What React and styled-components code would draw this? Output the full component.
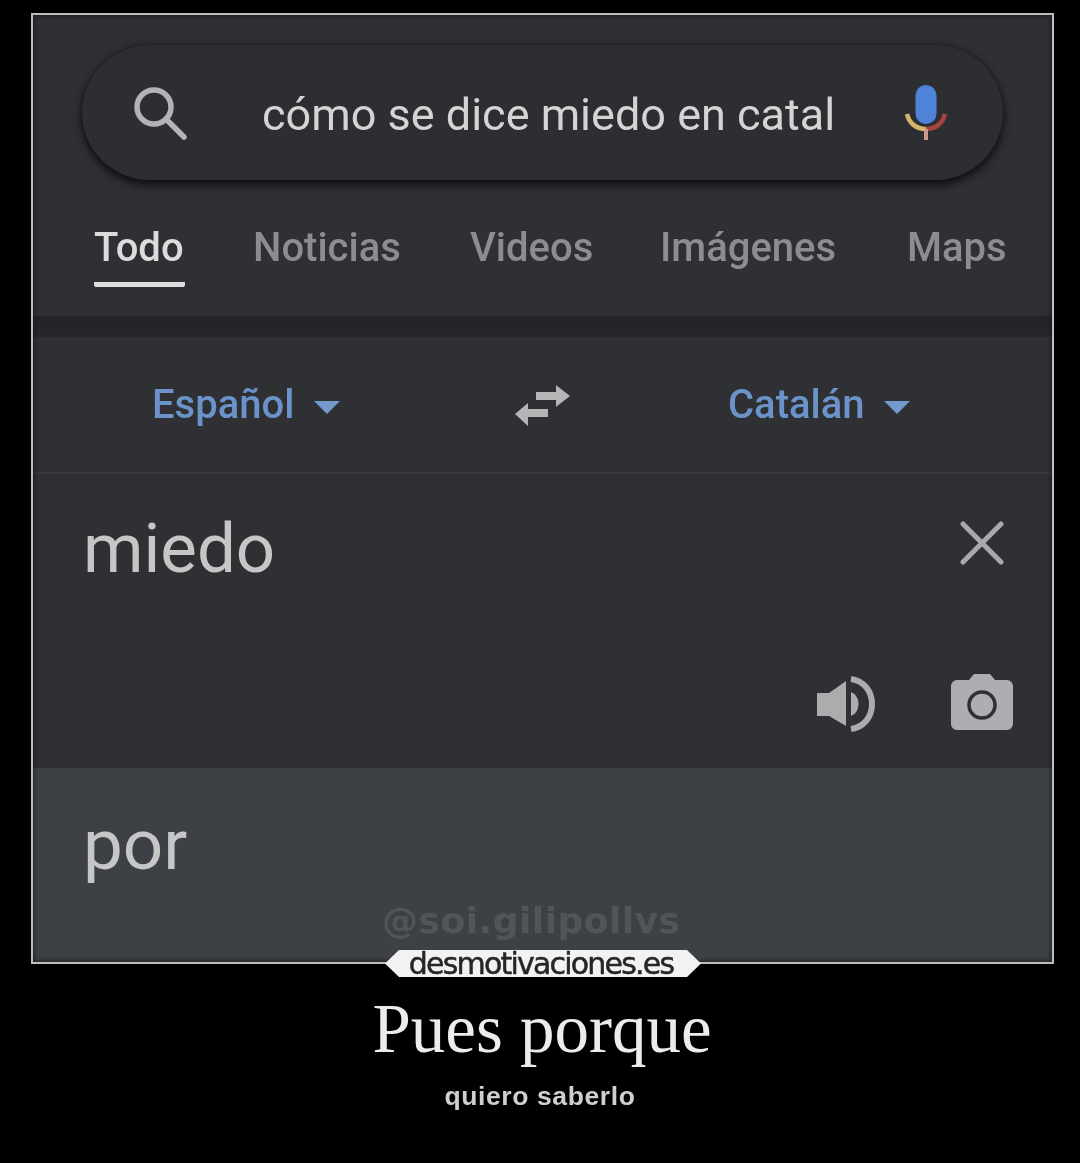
import React from "react";
import styled, { createGlobalStyle } from "styled-components";

const GlobalStyle = createGlobalStyle`
  html, body {
    margin: 0;
    background: #000;
  }
  * {
    box-sizing: border-box;
  }
`;

const SearchIcon = () => (
  <svg width="56" height="56" viewBox="0 0 56 56" fill="none" stroke="#b3b3b5" strokeWidth="5.5">
    <circle cx="21" cy="21" r="17" />
    <path d="M33 33 L51 51" strokeLinecap="round" />
  </svg>
);

const MicIcon = () => (
  <svg width="44" height="58" viewBox="0 0 44 58" fill="none" strokeWidth="4.5">
    <rect x="11.5" y="0" width="21" height="39" rx="10.5" fill="#4f83d8" />
    <path d="M3 29 C5 38 12 44 22 44" stroke="#d3b56c" />
    <path d="M22 44 C32 44 39 38 41 29" stroke="#a8443d" />
    <path d="M22 44 V55" stroke="#c99a8c" strokeWidth="4" />
  </svg>
);

const SwapIcon = () => (
  <svg width="56" height="44" viewBox="0 0 56 44" fill="#b5b5b7">
    <path d="M21 7 H41 V0 L55 11 L41 22 V15 H21 Z" />
    <path d="M33 24 H13 V18 L0 29 L13 41 V32 H33 Z" />
  </svg>
);

const CloseIcon = () => (
  <svg width="44" height="44" viewBox="0 0 44 44" stroke="#a9a9ab" strokeWidth="5" strokeLinecap="round">
    <path d="M3 3 L41 41 M41 3 L3 41" />
  </svg>
);

const SpeakerIcon = () => (
  <svg width="58" height="56" viewBox="0 0 58 56" fill="none">
    <path d="M0 17 H12 L29 5 V50 L12 40 H0 Z" fill="#acacae" />
    <path d="M34 16 C44 20 44 36 34 40 Z" fill="#acacae" />
    <path d="M34 3 C62 7 62 49 34 53" stroke="#acacae" strokeWidth="6" />
  </svg>
);

const CameraIcon = () => (
  <svg width="64" height="58" viewBox="0 0 64 58">
    <path
      d="M7 7 H19 L24 1 H40 L45 7 H57 C60 7 63 10 63 13 V51 C63 54 60 57 57 57 H7 C4 57 1 54 1 51 V13 C1 10 4 7 7 7 Z"
      fill="#adaeb2"
    />
    <circle cx="32" cy="32" r="13" fill="#adaeb2" stroke="#2f3034" strokeWidth="3.5" />
  </svg>
);

const tabs = [
  { label: "Todo", width: 91, gap: 0, active: true },
  { label: "Noticias", width: 148, gap: 68 },
  { label: "Videos", width: 122, gap: 69 },
  { label: "Imágenes", width: 178, gap: 68 },
  { label: "Maps", width: 98, gap: 69 },
];

const App = function () {
  return (
    <Page>
      <GlobalStyle />
      <Frame>
        <TopSection>
          <SearchPill>
            <SearchIconSlot>
              <SearchIcon />
            </SearchIconSlot>
            <Query>cómo se dice miedo en catal</Query>
            <MicSlot>
              <MicIcon />
            </MicSlot>
          </SearchPill>
          <TabRow>
            {tabs.map((tab) => (
              <Tab key={tab.label} $width={tab.width} $gap={tab.gap} $active={tab.active}>
                {tab.label}
              </Tab>
            ))}
          </TabRow>
        </TopSection>
        <DarkBand />
        <LangRow>
          <LangButton $width={188} $left={119}>
            Español <Caret />
          </LangButton>
          <SwapSlot>
            <SwapIcon />
          </SwapSlot>
          <LangButton $width={182} $left={157}>
            Catalán <Caret />
          </LangButton>
        </LangRow>
        <InputSection>
          <InputRow>
            <BigText $size={69}>miedo</BigText>
            <CloseSlot>
              <CloseIcon />
            </CloseSlot>
          </InputRow>
          <ActionRow>
            <SpeakerSlot>
              <SpeakerIcon />
            </SpeakerSlot>
            <CameraIcon />
          </ActionRow>
        </InputSection>
        <OutputSection>
          <BigText $size={71}>por</BigText>
          <Watermark>@soi.gilipollvs</Watermark>
        </OutputSection>
        <SiteLabel>desmotivaciones.es</SiteLabel>
      </Frame>
      <Title>Pues porque</Title>
      <Subtitle>quiero saberlo</Subtitle>
    </Page>
  );
};

export default App;

const Page = styled.div`
  width: 1080px;
  height: 1163px;
  padding: 13px 26px 0 31px;
  background: #000;
  overflow: hidden;
`;

const Frame = styled.div`
  position: relative;
  width: 1023px;
  height: 951px;
  border: 2px solid #bdbdbd;
  display: flex;
  flex-direction: column;
  background: #2f3034;
  &::after {
    content: "";
    position: absolute;
    inset: 0;
    box-shadow: inset 0 0 4px 1px rgba(18, 18, 20, 0.7);
    pointer-events: none;
  }
`;

const TopSection = styled.div`
  height: 301px;
  padding: 30px 46px 0 49px;
  background: #2f3034;
  filter: blur(0.6px);
`;

const SearchPill = styled.div`
  width: 921px;
  height: 135px;
  border-radius: 68px;
  background: #2d2e31;
  box-shadow: 0 5px 9px rgba(12, 12, 14, 0.85), 0 0 5px rgba(18, 18, 20, 0.6);
  display: flex;
  align-items: center;
`;

const SearchIconSlot = styled.div`
  width: 180px;
  padding: 3px 0 0 51px;
  display: flex;
`;

const Query = styled.div`
  width: 642px;
  padding-top: 4px;
  font: 400 45px "Roboto", sans-serif;
  color: #d4d4d4;
  white-space: nowrap;
`;

const MicSlot = styled.div`
  display: flex;
  padding-top: 3px;
`;

const TabRow = styled.div`
  display: flex;
  margin-top: 46px;
  margin-left: 12px;
`;

const Tab = styled.div`
  width: ${(p) => p.$width}px;
  margin-left: ${(p) => p.$gap}px;
  height: 61px;
  font: 500 40px/44px "Roboto", sans-serif;
  color: ${(p) => (p.$active ? "#dcdcdc" : "#8c8d94")};
  white-space: nowrap;
  border-bottom: ${(p) => (p.$active ? "5px solid #dedede" : "none")};
  border-radius: 0 0 2px 2px;
`;

const DarkBand = styled.div`
  height: 21px;
  background: linear-gradient(#222326, #27282b);
`;

const LangRow = styled.div`
  height: 137px;
  display: flex;
  align-items: center;
  border-bottom: 2px solid #38393d;
  filter: blur(0.6px);
`;

const LangButton = styled.div`
  width: ${(p) => p.$width}px;
  margin-left: ${(p) => p.$left}px;
  display: flex;
  align-items: center;
  justify-content: space-between;
  font: 500 40px "Roboto", sans-serif;
  color: #6b93c9;
  white-space: nowrap;
`;

const Caret = styled.span`
  width: 0;
  height: 0;
  margin-top: 6px;
  border-left: 13px solid transparent;
  border-right: 13px solid transparent;
  border-top: 13px solid #7399cd;
`;

const SwapSlot = styled.div`
  margin: 4px 0 0 175px;
  display: flex;
`;

const InputSection = styled.div`
  height: 294px;
  padding: 39px 38px 0 50px;
  display: flex;
  flex-direction: column;
  background: #2f3034;
  filter: blur(0.5px);
`;

const InputRow = styled.div`
  display: flex;
  align-items: flex-start;
  justify-content: space-between;
  padding-right: 10px;
`;

const CloseSlot = styled.div`
  display: flex;
  margin-top: 8px;
`;

const BigText = styled.div`
  font: 400 ${(p) => p.$size}px "Roboto", sans-serif;
  color: #c6c6c6;
  line-height: 72px;
`;

const ActionRow = styled.div`
  display: flex;
  justify-content: flex-end;
  align-items: flex-start;
  gap: 75px;
  margin-top: 88px;
`;

const SpeakerSlot = styled.div`
  display: flex;
  margin-top: 3px;
`;

const OutputSection = styled.div`
  position: relative;
  flex: 1;
  padding: 41px 0 0 50px;
  background: #3d4145;
  filter: blur(0.5px);
`;

const Watermark = styled.div`
  position: absolute;
  left: 349px;
  top: 132px;
  font: 700 36px "DejaVu Sans", sans-serif;
  letter-spacing: 0.5px;
  color: #51555a;
  white-space: nowrap;
`;

const SiteLabel = styled.div`
  position: absolute;
  z-index: 1;
  left: 352px;
  bottom: -15px;
  width: 316px;
  height: 27px;
  padding-right: 4px;
  background: #f2f2f2;
  clip-path: polygon(14px 0, calc(100% - 14px) 0, 100% 50%, calc(100% - 14px) 100%, 14px 100%, 0 50%);
  color: #26262a;
  font: 400 30px/27px "DejaVu Sans", sans-serif;
  letter-spacing: -1.8px;
  -webkit-text-stroke: 0.5px #26262a;
  text-align: center;
  white-space: nowrap;
  filter: blur(0.4px);
`;

const Title = styled.div`
  margin-top: 25px;
  margin-left: -1px;
  text-align: center;
  font: 400 69px/80px "Liberation Serif", serif;
  color: #ececec;
  filter: blur(0.5px);
`;

const Subtitle = styled.div`
  margin-top: 11px;
  margin-left: -5px;
  text-align: center;
  font: 700 26.5px/32px "Liberation Sans", sans-serif;
  letter-spacing: 0.6px;
  color: #cfcfcf;
  filter: blur(0.5px);
`;
